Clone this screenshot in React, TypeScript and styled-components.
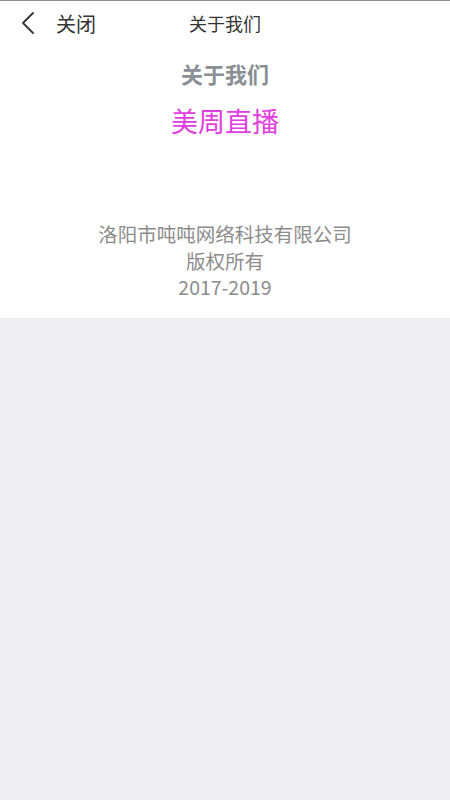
import React from 'react';
import styled, { createGlobalStyle } from 'styled-components';

const GlobalStyle = createGlobalStyle`
  html, body {
    margin: 0;
    padding: 0;
    background: #eeedf0;
    font-family: "Noto Sans CJK SC", Roboto, sans-serif;
  }
`;

const Page = styled.div`
  min-height: 800px;
  background: #eeedf0;
  border-top: 1px solid #8e8e8e;
  box-sizing: border-box;
`;

const Header = styled.div`
  height: 47px;
  box-sizing: border-box;
  padding-bottom: 3px;
  display: grid;
  grid-template-columns: 1fr auto 1fr;
  align-items: center;
  background: #fff;
`;

const BackButton = styled.div`
  display: flex;
  align-items: center;
  gap: 20px;
  padding-left: 20px;
  font-size: 20px;
  color: #333;
`;

const Title = styled.div`
  font-size: 18px;
  color: #333;
`;

const Panel = styled.div`
  background: #fff;
  display: flex;
  flex-direction: column;
  align-items: center;
  padding-top: 10px;
  padding-bottom: 17px;
`;

const Heading = styled.div`
  font-size: 22px;
  font-weight: 700;
  color: #8a8f93;
  line-height: 30px;
`;

const AppName = styled.div`
  font-size: 27px;
  color: #e23de0;
  line-height: 36px;
  margin-top: 15px;
`;

const Footer = styled.div`
  margin-top: 82px;
  font-size: 19.5px;
  color: #8c8c8c;
  line-height: 26.5px;
  text-align: center;
`;

export default function App() {
  return (
    <>
      <GlobalStyle />
      <Page>
        <Header>
          <BackButton>
            <svg width="16" height="24" viewBox="0 0 16 24" fill="none">
              <path d="M13 2 L3 12 L13 22" stroke="#333" strokeWidth="1.8" strokeLinecap="round" strokeLinejoin="round" />
            </svg>
            <span>关闭</span>
          </BackButton>
          <Title>关于我们</Title>
          <div />
        </Header>
        <Panel>
          <Heading>关于我们</Heading>
          <AppName>美周直播</AppName>
          <Footer>
            <div>洛阳市吨吨网络科技有限公司</div>
            <div>版权所有</div>
            <div>2017-2019</div>
          </Footer>
        </Panel>
      </Page>
    </>
  );
}
